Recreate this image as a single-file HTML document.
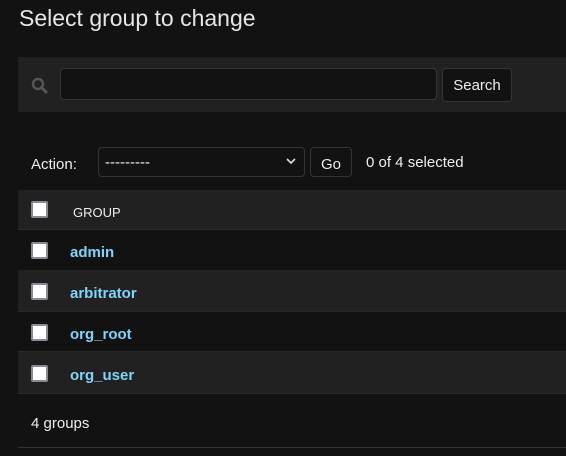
<!DOCTYPE html>
<html><head><style>
body{margin:0;background:#121212;width:566px;height:456px;overflow:hidden;font-family:"Liberation Sans",sans-serif;color:#eee;position:relative}
.a{position:absolute}
h1{position:absolute;left:19px;top:5px;margin:0;font-weight:300;font-size:23px;color:#e6e6e6}
.tb{left:18px;top:57px;width:548px;height:55px;background:#212121}
.inp{left:60px;top:68px;width:375px;height:30px;border:1px solid #353535;border-radius:4px;background:#121212}
.btn{border:1px solid #353535;border-radius:4px;background:#121212;color:#eee;font-size:15px;text-align:center;box-sizing:border-box}
.cb{width:13px;height:13px;background:#fff;border:2px solid #8a8a94;border-radius:2px;left:31px}
.row{left:18px;width:548px;height:40px;border-bottom:1px solid #2a2a2a}
.lnk{left:70px;color:#81d4fa;font-weight:bold;font-size:15px}
</style></head><body>
<h1>Select group to change</h1>
<div class="a tb"></div>
<svg class="a" style="left:31px;top:77px" width="18" height="18" viewBox="0 0 18 18"><circle cx="7" cy="7" r="5" fill="none" stroke="#555" stroke-width="2.5"/><line x1="10.5" y1="10.5" x2="15" y2="15" stroke="#555" stroke-width="3" stroke-linecap="round"/></svg>
<div class="a inp"></div>
<div class="a btn" style="left:442px;top:68px;width:70px;height:34px;line-height:34px">Search</div>
<div class="a" style="left:31px;top:156px;font-size:15px">Action:</div>
<div class="a btn" style="left:98px;top:147px;width:207px;height:30px;text-align:left;padding-left:6px;line-height:30px">---------</div>
<svg class="a" style="left:286px;top:157px" width="10" height="8" viewBox="0 0 10 8"><path d="M1 2l4 4 4-4" fill="none" stroke="#ddd" stroke-width="1.6"/></svg>
<div class="a btn" style="left:310px;top:147px;width:42px;height:30px;line-height:33px">Go</div>
<div class="a" style="left:366px;top:154px;font-size:15px">0 of 4 selected</div>
<div class="a row" style="top:190px;background:#212121;height:39px"></div>
<div class="a cb" style="top:201px"></div>
<div class="a" style="left:73px;top:205px;font-size:13px">GROUP</div>
<div class="a row" style="top:230px"></div>
<div class="a cb" style="top:242px"></div><div class="a lnk" style="top:244px">admin</div>
<div class="a row" style="top:270px;background:#212121;height:41px"></div>
<div class="a cb" style="top:283px"></div><div class="a lnk" style="top:285px">arbitrator</div>
<div class="a row" style="top:311px"></div>
<div class="a cb" style="top:324px"></div><div class="a lnk" style="top:326px">org_root</div>
<div class="a row" style="top:352px;background:#212121;height:41px"></div>
<div class="a cb" style="top:365px"></div><div class="a lnk" style="top:367px">org_user</div>
<div class="a" style="left:31px;top:415px;font-size:15px">4 groups</div>
<div class="a" style="left:18px;top:447px;width:548px;height:1px;background:#353535"></div>
</body></html>
